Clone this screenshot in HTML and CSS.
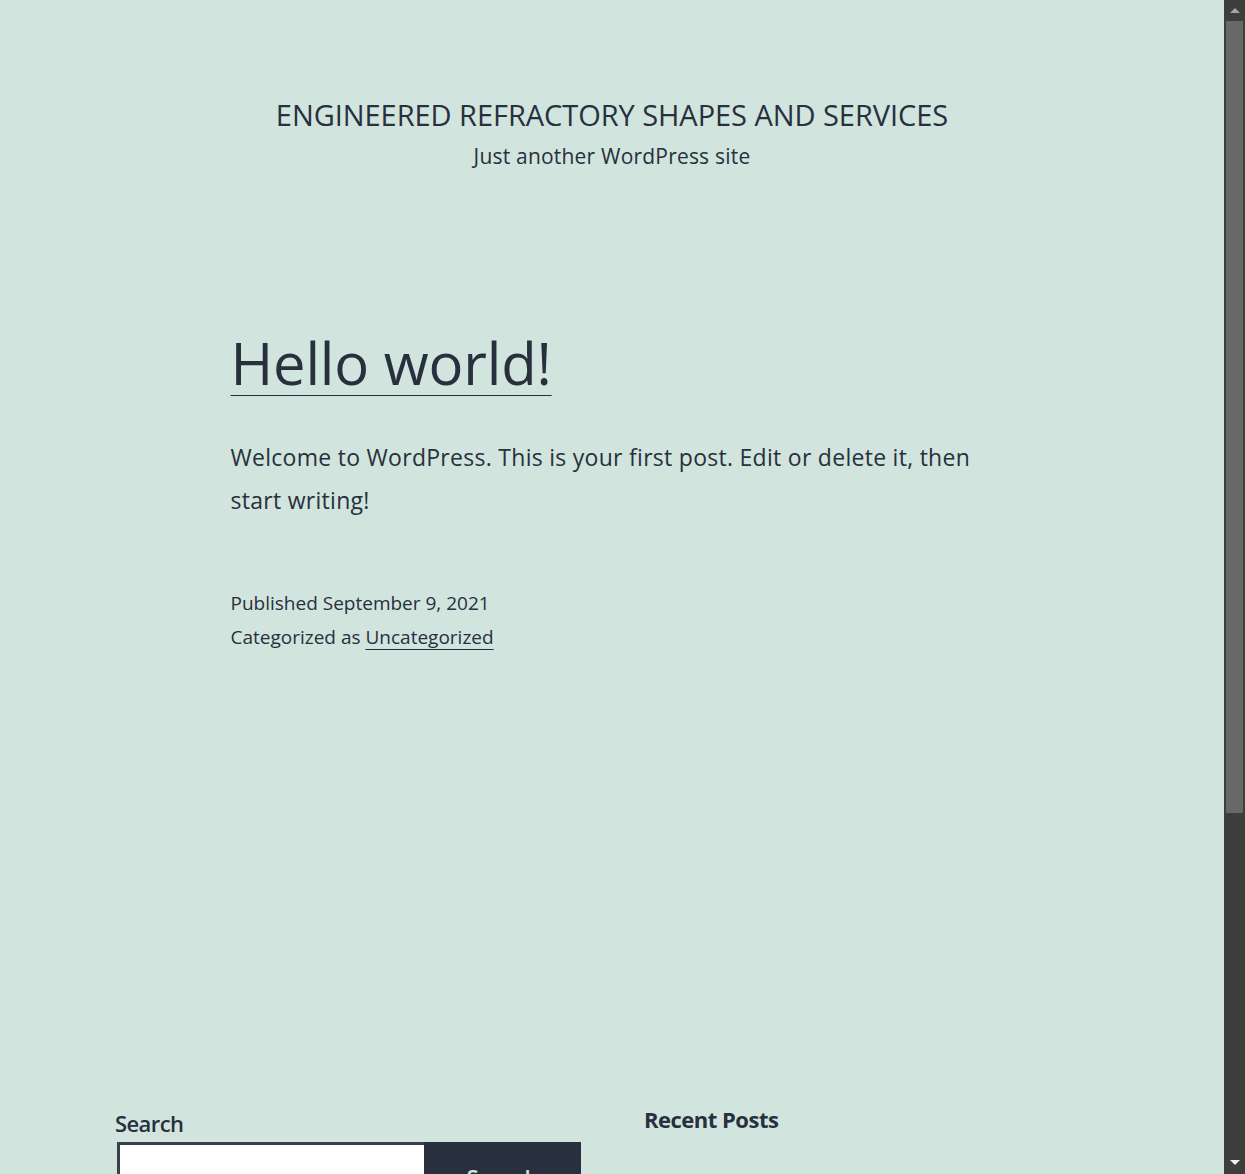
FILE: index.html
```html
<!DOCTYPE html>
<html lang="en">
<head>
<meta charset="utf-8">
<title>Engineered Refractory Shapes and Services</title>
<link rel="stylesheet" href="styles.css">
</head>
<body>
<div class="page">
  <header class="site-header">
    <p class="site-title">Engineered Refractory Shapes and Services</p>
    <p class="site-description">Just another WordPress site</p>
  </header>
  <main class="site-main">
    <article class="post">
      <h2 class="entry-title"><a href="#">Hello world!</a></h2>
      <div class="entry-content">
        <p>Welcome to WordPress. This is your first post. Edit or delete it, then start writing!</p>
      </div>
      <footer class="entry-footer">
        <div class="meta-line">Published September 9, 2021</div>
        <div class="meta-line">Categorized as <a href="#">Uncategorized</a></div>
      </footer>
    </article>
  </main>
  <aside class="widget-area">
    <section class="widget widget-search">
      <label class="search-label">Search</label>
      <div class="search-row">
        <div class="search-input"></div>
        <div class="search-button">Search</div>
      </div>
    </section>
    <section class="widget widget-recent">
      <h2 class="widget-title">Recent Posts</h2>
    </section>
  </aside>
</div>
<div class="scrollbar">
  <div class="sb-up"></div>
  <div class="sb-thumb"></div>
  <div class="sb-down"></div>
</div>
</body>
</html>
```
FILE: styles.css
```css
html, body {
  margin: 0;
  padding: 0;
  height: 100%;
  overflow: hidden;
}
body {
  background: #d1e4dd;
  color: #28303d;
  font-family: "Open Sans", "Noto Sans", sans-serif;
}
.page {
  width: 1224px;
}
p { margin: 0; }
a { color: #28303d; }

.site-header {
  padding-top: 97px;
  text-align: center;
}
.site-title {
  font-size: 29px;
  line-height: 36px;
  text-transform: uppercase;
  letter-spacing: -0.05px;
}
.site-description {
  margin-top: 8px;
  font-size: 21px;
  line-height: 30px;
  letter-spacing: 0.2px;
}

.site-main {
  width: 763px;
  margin: 156px auto 0;
}
.entry-title {
  margin: 0;
  font-size: 58px;
  font-weight: 400;
  line-height: 72px;
  letter-spacing: -0.2px;
}
.entry-title a {
  text-decoration: underline;
  text-decoration-thickness: 1px;
  text-underline-offset: 10px;
}
.entry-content {
  margin-top: 37px;
  font-size: 23px;
  line-height: 43px;
  letter-spacing: 0.28px;
}
.entry-footer {
  margin-top: 64px;
  font-size: 19px;
  line-height: 34px;
  letter-spacing: 0;
}
.entry-footer a {
  text-decoration-thickness: 1px;
  text-underline-offset: 5px;
}

.widget-area {
  margin: 446px 115px 0;
  display: grid;
  grid-template-columns: 466px 466px;
  column-gap: 63px;
}
.search-label {
  display: block;
  font-size: 22px;
  font-weight: 600;
  line-height: 30px;
  margin-top: 8px;
  letter-spacing: -0.6px;
}
.search-row {
  display: flex;
  margin-top: 4px;
  margin-left: 2px;
}
.search-input {
  width: 304px;
  height: 60px;
  background: #fff;
  border: 3px solid #39414d;
  border-right: none;
}
.search-button {
  width: 157px;
  height: 63px;
  box-sizing: border-box;
  background: #28303d;
  color: #d1e4dd;
  font-size: 22px;
  font-weight: 600;
  text-align: center;
  padding-top: 20px;
  line-height: 30px;
}
.widget-title {
  margin: 4px 0 0;
  font-size: 22px;
  font-weight: 700;
  line-height: 30px;
  letter-spacing: -0.5px;
}

.scrollbar {
  position: fixed;
  top: 0;
  right: 0;
  width: 21px;
  height: 100%;
  background: #3e3e3e;
}
.sb-up {
  position: absolute;
  top: 8px;
  left: 6px;
  width: 0;
  height: 0;
  border-left: 5px solid transparent;
  border-right: 5px solid transparent;
  border-bottom: 5px solid #a3a3a3;
}
.sb-thumb {
  position: absolute;
  top: 21px;
  left: 2px;
  width: 17px;
  height: 792px;
  background: #686868;
}
.sb-down {
  position: absolute;
  bottom: 9px;
  left: 6px;
  width: 0;
  height: 0;
  border-left: 5px solid transparent;
  border-right: 5px solid transparent;
  border-top: 5px solid #f0f0f0;
}
```
